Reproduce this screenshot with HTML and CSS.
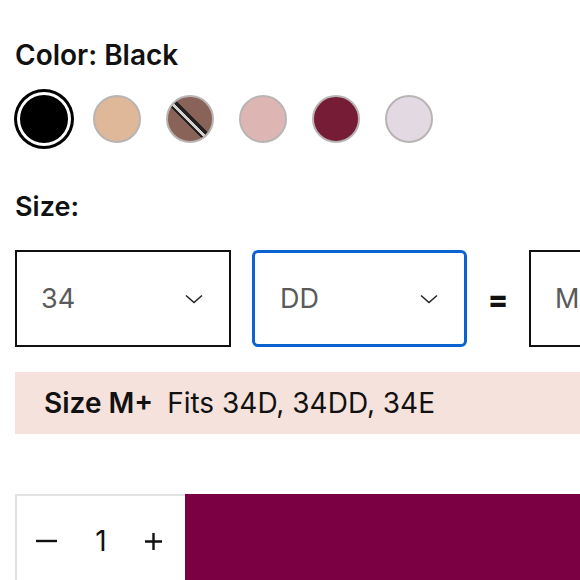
FILE: index.html
```html
<!DOCTYPE html>
<html>
<head>
<meta charset="utf-8">
<link rel="stylesheet" href="styles.css">
</head>
<body>
<div class="page">
  <div class="label">Color: Black</div>
  <div class="swatches">
    <span class="swatch black selected"></span>
    <span class="swatch tan"></span>
    <span class="swatch brown"></span>
    <span class="swatch pink"></span>
    <span class="swatch wine"></span>
    <span class="swatch lilac"></span>
  </div>
  <div class="label size-label">Size:</div>
  <div class="selects">
    <div class="select">
      <span class="value">34</span>
      <svg class="chev" width="18" height="10" viewBox="0 0 18 10"><path d="M1 1.5 L9 8.5 L17 1.5" fill="none" stroke="#222" stroke-width="1.5"/></svg>
    </div>
    <div class="select focused">
      <span class="value">DD</span>
      <svg class="chev" width="18" height="10" viewBox="0 0 18 10"><path d="M1 1.5 L9 8.5 L17 1.5" fill="none" stroke="#222" stroke-width="1.5"/></svg>
    </div>
    <div class="equals">=</div>
    <div class="select result">
      <span class="value">M+</span>
    </div>
  </div>
  <div class="fit"><b>Size M+</b><span>Fits 34D, 34DD, 34E</span></div>
  <div class="buy">
    <div class="qty">
      <svg class="qbtn" width="21" height="20" viewBox="0 0 21 20"><path d="M0 10 H21" stroke="#111" stroke-width="2.4"/></svg>
      <span class="qnum">1</span>
      <svg class="qbtn" width="17" height="20" viewBox="0 0 17 20"><path d="M0 10.5 H17 M8.5 2 V19" stroke="#111" stroke-width="2.4"/></svg>
    </div>
    <div class="add"></div>
  </div>
</div>
</body>
</html>
```
FILE: styles.css
```css
html, body {
  margin: 0;
  padding: 0;
  overflow: hidden;
  background: #fff;
}
body {
  font-family: Inter, "Liberation Sans", sans-serif;
  color: #111;
}
.page {
  padding: 38px 0 0 15px;
  width: 900px;
}
.label {
  font-size: 28px;
  font-weight: 600;
  line-height: 34px;
}
.swatches {
  display: flex;
  gap: 25px;
  padding: 6px;
  margin-top: 17px;
  margin-left: -1px;
}
.swatch {
  width: 48px;
  height: 48px;
  border-radius: 50%;
  box-sizing: border-box;
  border: 2px solid #b9b4b4;
  display: block;
}
.swatch.black {
  background: #000;
  border-color: #000;
}
.swatch.selected {
  box-shadow: 0 0 0 3px #fff, 0 0 0 6px #000;
}
.tan { background: #deb898; }
.brown {
  background: linear-gradient(45deg, #8a6358 0 41%, #222 41% 45%, #d9cfcc 45% 50%, #222 50% 55%, #8a6358 55% 100%);
}
.pink { background: #ddb6b4; }
.wine { background: #761c37; }
.lilac { background: #e3d9e3; }

.size-label {
  margin-top: 41px;
  font-size: 27px;
}
.selects {
  display: flex;
  align-items: center;
  margin-top: 26px;
}
.select {
  box-sizing: border-box;
  width: 216px;
  height: 97px;
  border: 2px solid #111;
  display: flex;
  align-items: center;
  justify-content: space-between;
  padding: 0 26px 0 24px;
  flex-shrink: 0;
}
.select .value {
  font-size: 27px;
  color: #5a5a5a;
}
.select.focused {
  margin-left: 21px;
  border: 3px solid #0b63d0;
  border-radius: 6px;
  width: 215px;
  padding-left: 25px;
}
.equals {
  width: 62px;
  text-align: center;
  font-size: 30px;
  font-weight: 800;
  color: #111;
}
.fit {
  margin-top: 25px;
  background: #f5e2dc;
  height: 62px;
  display: flex;
  align-items: center;
  padding-left: 29px;
  font-size: 28px;
  gap: 14px;
}
.fit b {
  font-weight: 600;
}
.buy {
  display: flex;
  margin-top: 60px;
}
.qty {
  box-sizing: border-box;
  width: 170px;
  height: 94px;
  border: 2px solid #e2e2e2;
  border-right: none;
  display: flex;
  align-items: center;
  padding: 0 23px 0 19px;
  justify-content: space-between;
  font-size: 28px;
}
.qbtn {
  display: block;
}
.add {
  width: 600px;
  height: 94px;
  background: #7b0043;
}
```
